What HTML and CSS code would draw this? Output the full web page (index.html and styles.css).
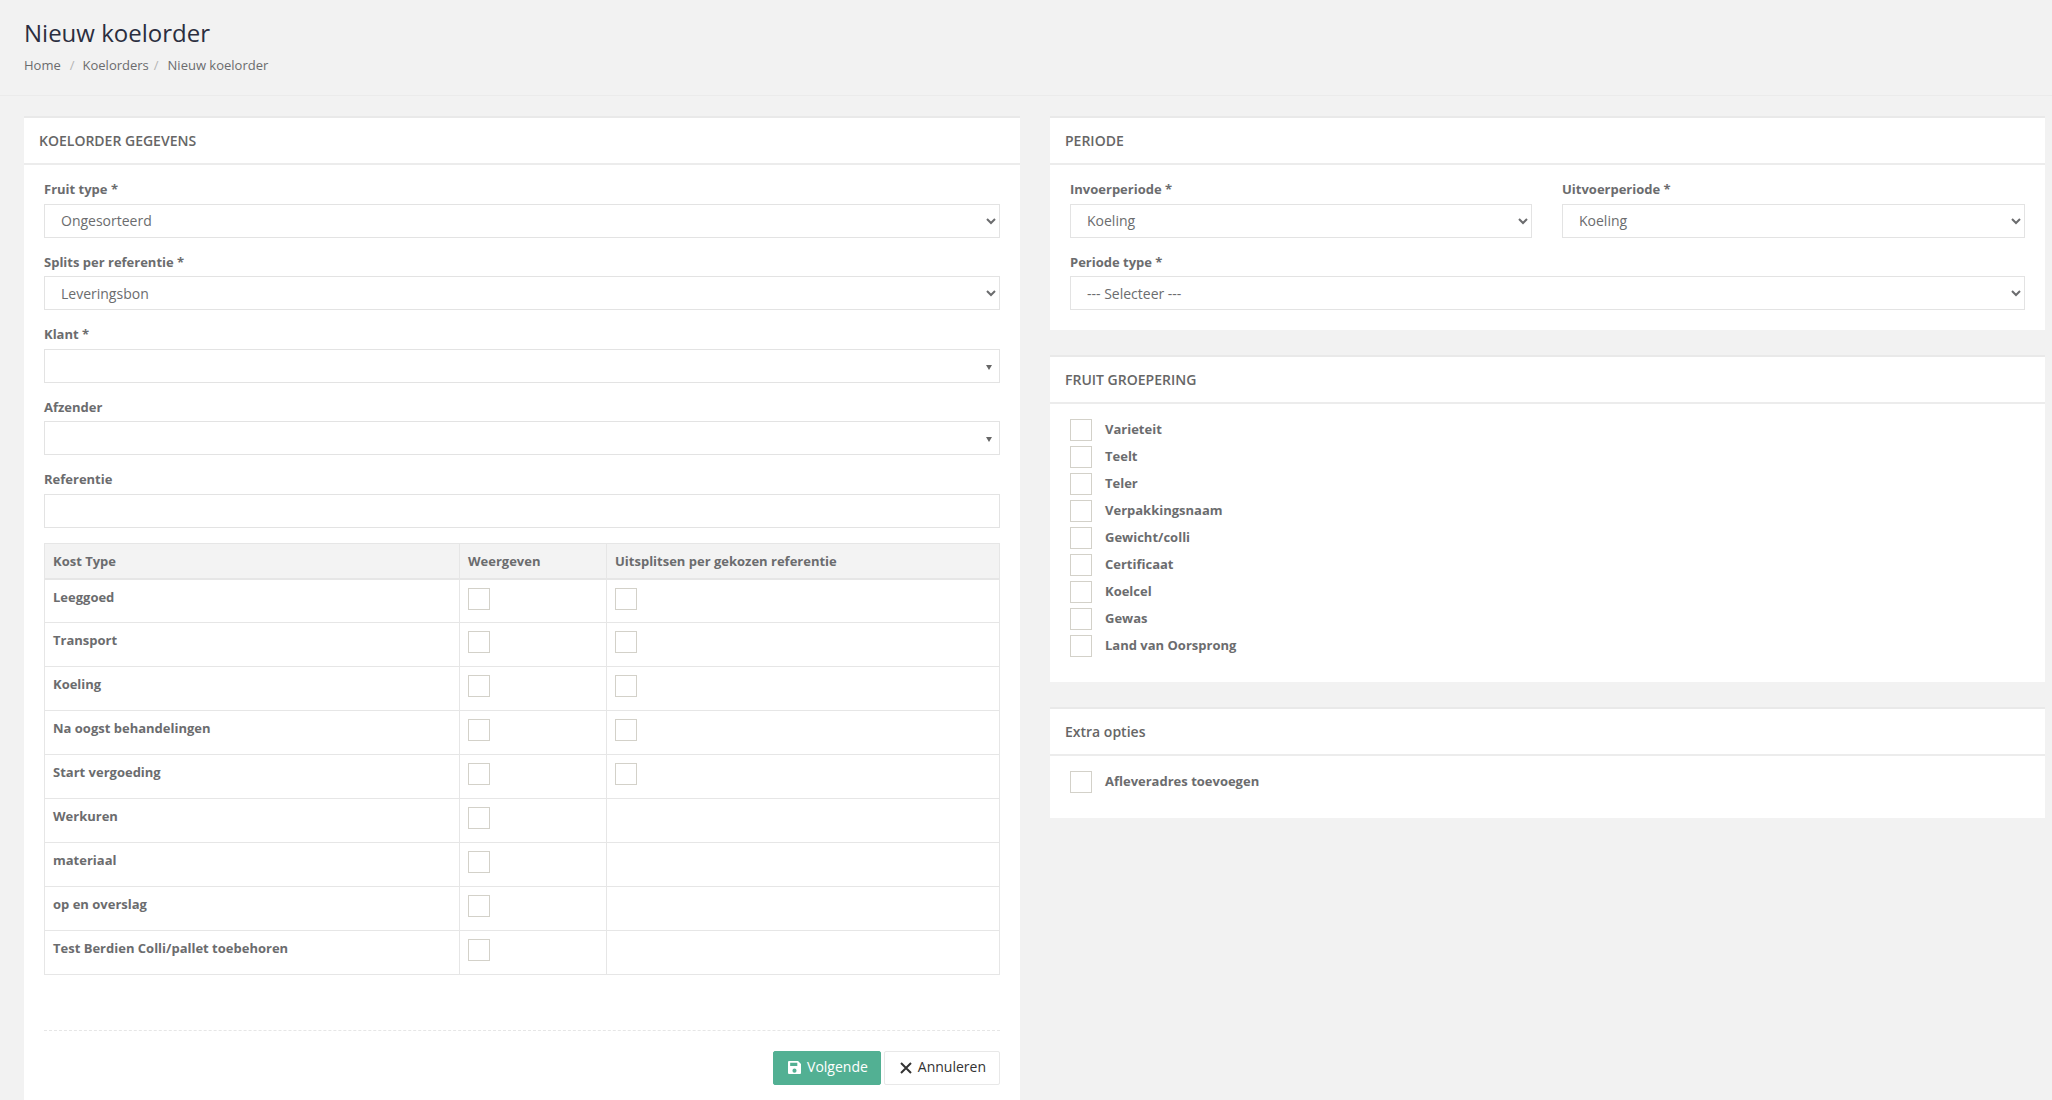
FILE: index.html
```html
<!DOCTYPE html>
<html>
<head>
  <title>Nieuw koelorder</title>
  <meta http-equiv="Content-Type" content="text/html; charset=UTF-8" />
  <link rel="stylesheet" href="styles.css">
</head>
<body>
  <div class="page-head">
    <h1>Nieuw koelorder</h1>
    <ul class="breadcrumb">
      <li><a href="#">Home</a></li>
      <li class="sep sep-wide">/</li>
      <li><a href="#">Koelorders</a></li>
      <li class="sep">/</li>
      <li>Nieuw koelorder</li>
    </ul>
  </div>

  <div class="content">
    <div class="col">
      <div class="panel panel-main">
        <div class="panel-title upper">Koelorder gegevens</div>
        <form class="panel-body">
          <div class="field">
            <label>Fruit type *</label>
            <select class="control"><option>Ongesorteerd</option></select>
          </div>
          <div class="field">
            <label>Splits per referentie *</label>
            <select class="control"><option>Leveringsbon</option></select>
          </div>
          <div class="field">
            <label>Klant *</label>
            <div class="control combo"><span class="combo-arrow"></span></div>
          </div>
          <div class="field">
            <label>Afzender</label>
            <div class="control combo"><span class="combo-arrow"></span></div>
          </div>
          <div class="field">
            <label>Referentie</label>
            <input type="text" class="control">
          </div>

          <table class="cost-table">
            <thead>
              <tr>
                <th class="col-type">Kost Type</th>
                <th class="col-show">Weergeven</th>
                <th>Uitsplitsen per gekozen referentie</th>
              </tr>
            </thead>
            <tbody>
              <tr><td>Leeggoed</td><td><input type="checkbox"></td><td><input type="checkbox"></td></tr>
              <tr><td>Transport</td><td><input type="checkbox"></td><td><input type="checkbox"></td></tr>
              <tr><td>Koeling</td><td><input type="checkbox"></td><td><input type="checkbox"></td></tr>
              <tr><td>Na oogst behandelingen</td><td><input type="checkbox"></td><td><input type="checkbox"></td></tr>
              <tr><td>Start vergoeding</td><td><input type="checkbox"></td><td><input type="checkbox"></td></tr>
              <tr><td>Werkuren</td><td><input type="checkbox"></td><td></td></tr>
              <tr><td>materiaal</td><td><input type="checkbox"></td><td></td></tr>
              <tr><td>op en overslag</td><td><input type="checkbox"></td><td></td></tr>
              <tr><td>Test Berdien Colli/pallet toebehoren</td><td><input type="checkbox"></td><td></td></tr>
            </tbody>
          </table>

          <div class="form-actions">
            <button type="button" class="btn btn-green">
              <svg class="icon icon-save" viewBox="1 1 12 12"><path fill-rule="evenodd" d="M2 1h8.300L13 3.700V12a1 1 0 0 1-1 1H2a1 1 0 0 1-1-1V2a1 1 0 0 1 1-1zm1 1.600v3h6.600v-3zM7 8a1.900 1.900 0 1 0 0 3.800a1.900 1.900 0 0 0 0-3.800z"/></svg>
              <span>Volgende</span>
            </button>
            <button type="button" class="btn btn-white">
              <svg class="icon icon-close" viewBox="1 1 12 12"><path d="M2 2l10 10M12 2L2 12" fill="none" stroke="#333" stroke-width="2"/></svg>
              <span>Annuleren</span>
            </button>
          </div>
        </form>
      </div>
    </div>

    <div class="col">
      <div class="panel">
        <div class="panel-title upper">Periode</div>
        <div class="panel-body">
          <div class="field-row">
            <div class="field">
              <label>Invoerperiode *</label>
              <select class="control"><option>Koeling</option></select>
            </div>
            <div class="field">
              <label>Uitvoerperiode *</label>
              <select class="control"><option>Koeling</option></select>
            </div>
          </div>
          <div class="field">
            <label>Periode type *</label>
            <select class="control"><option>--- Selecteer ---</option></select>
          </div>
        </div>
      </div>

      <div class="panel">
        <div class="panel-title upper">Fruit groepering</div>
        <div class="panel-body check-list">
          <label class="check"><input type="checkbox"><span>Varieteit</span></label>
          <label class="check"><input type="checkbox"><span>Teelt</span></label>
          <label class="check"><input type="checkbox"><span>Teler</span></label>
          <label class="check"><input type="checkbox"><span>Verpakkingsnaam</span></label>
          <label class="check"><input type="checkbox"><span>Gewicht/colli</span></label>
          <label class="check"><input type="checkbox"><span>Certificaat</span></label>
          <label class="check"><input type="checkbox"><span>Koelcel</span></label>
          <label class="check"><input type="checkbox"><span>Gewas</span></label>
          <label class="check"><input type="checkbox"><span>Land van Oorsprong</span></label>
        </div>
      </div>

      <div class="panel">
        <div class="panel-title">Extra opties</div>
        <div class="panel-body check-list">
          <label class="check"><input type="checkbox"><span>Afleveradres toevoegen</span></label>
        </div>
      </div>
    </div>
  </div>
</body>
</html>
```

FILE: styles.css
```css
* {
  box-sizing: border-box;
}
html, body {
  height: 100%;
}
body {
  margin: 0;
  background-color: #f2f2f2;
  color: #6b6c6e;
  font-family: "Open Sans", sans-serif;
  font-size: 13px;
  overflow: hidden;
}
a {
  color: inherit;
  text-decoration: none;
}

/* page header */
.page-head {
  height: 96px;
  padding: 17px 24px 0;
  border-bottom: 1px solid #ebebeb;
}
h1 {
  margin: 0;
  color: #2b2e3f;
  font-size: 24px;
  font-weight: 400;
  line-height: 32px;
}
.breadcrumb {
  display: flex;
  margin: 7px 0 0;
  padding: 0;
  list-style: none;
  line-height: 18px;
}
.sep {
  margin: 0 9px 0 5px;
  color: #b5b5b5;
}
.sep-wide {
  margin: 0 8px 0 9px;
}

/* columns */
.content {
  display: grid;
  grid-template-columns: 996px 995px;
  column-gap: 30px;
  padding: 20px 7px 0 24px;
}
.panel {
  margin-bottom: 25px;
  background-color: #fff;
  border-top: 2px solid #e9e9e9;
}
.panel-main {
  height: 1000px;
}
.panel-title {
  height: 47px;
  padding: 0 15px;
  border-bottom: 2px solid #ececec;
  color: #666;
  font-size: 14px;
  font-weight: 600;
  line-height: 45px;
}
.panel-title.upper {
  text-transform: uppercase;
}
.panel-body {
  padding: 15px 20px 20px;
}

/* form fields */
.field {
  margin-bottom: 15px;
}
.field:last-child {
  margin-bottom: 0;
}
.field label {
  display: block;
  height: 23.5px;
  font-weight: 700;
  line-height: 18px;
}
.control {
  display: block;
  width: 100%;
  height: 34px;
  padding: 0 12px;
  background-color: #fff;
  border: 1px solid #e3e3e3;
  border-radius: 0;
  color: #6b6c6e;
  font-family: inherit;
  font-size: 14px;
}
.combo {
  position: relative;
}
.combo-arrow {
  position: absolute;
  top: 15px;
  right: 7px;
  border-top: 5px solid #666;
  border-left: 3px solid transparent;
  border-right: 3px solid transparent;
}
.field-row {
  display: grid;
  grid-template-columns: 462px 463px;
  column-gap: 30px;
  margin-bottom: 15px;
}
.field-row .field {
  margin-bottom: 0;
}

/* checkboxes */
input[type="checkbox"] {
  display: block;
  width: 22px;
  height: 22px;
  margin: 0;
  background-color: #fff;
  border: 1px solid #d3d1c9;
  appearance: none;
}

/* cost table */
.cost-table {
  width: 956px;
  margin-top: 0.5px;
  border-collapse: collapse;
  table-layout: fixed;
}
.cost-table th, .cost-table td {
  height: 44px;
  padding: 8px;
  border: 1px solid #e6e6e6;
  font-weight: 700;
  text-align: left;
  vertical-align: top;
}
.cost-table th {
  height: 35px;
  background-color: #f3f3f3;
  border-bottom-width: 2px;
  line-height: 18px;
}
.col-type {
  width: 415px;
}
.col-show {
  width: 147px;
}

/* buttons */
.form-actions {
  display: flex;
  justify-content: flex-end;
  gap: 3px;
  margin-top: 54.5px;
  padding-top: 20px;
  border-top: 1px dashed #e6e6e6;
}
.btn {
  display: flex;
  align-items: center;
  gap: 6px;
  height: 34px;
  border-radius: 2px;
  font-family: inherit;
  font-size: 14px;
}
.btn span {
  padding-bottom: 2px;
}
.btn-green {
  padding: 0 12px 0 14px;
  background-color: #52b093;
  border: 1px solid #52b093;
  color: #fff;
}
.btn-white {
  padding: 0 13px 0 15px;
  background-color: #fff;
  border: 1px solid #e8e8e8;
  color: #333;
}
.icon {
  fill: currentColor;
}
.icon-save {
  width: 13px;
  height: 13px;
}
.icon-close {
  width: 12px;
  height: 12px;
}

/* check lists */
.panel-body.check-list {
  padding: 15px 20px 25px;
}
.check {
  display: flex;
  align-items: center;
  gap: 13px;
  height: 22px;
  margin-bottom: 5px;
  font-weight: 700;
}
.check span {
  padding-bottom: 2px;
}
.check:last-child {
  margin-bottom: 0;
}
```
